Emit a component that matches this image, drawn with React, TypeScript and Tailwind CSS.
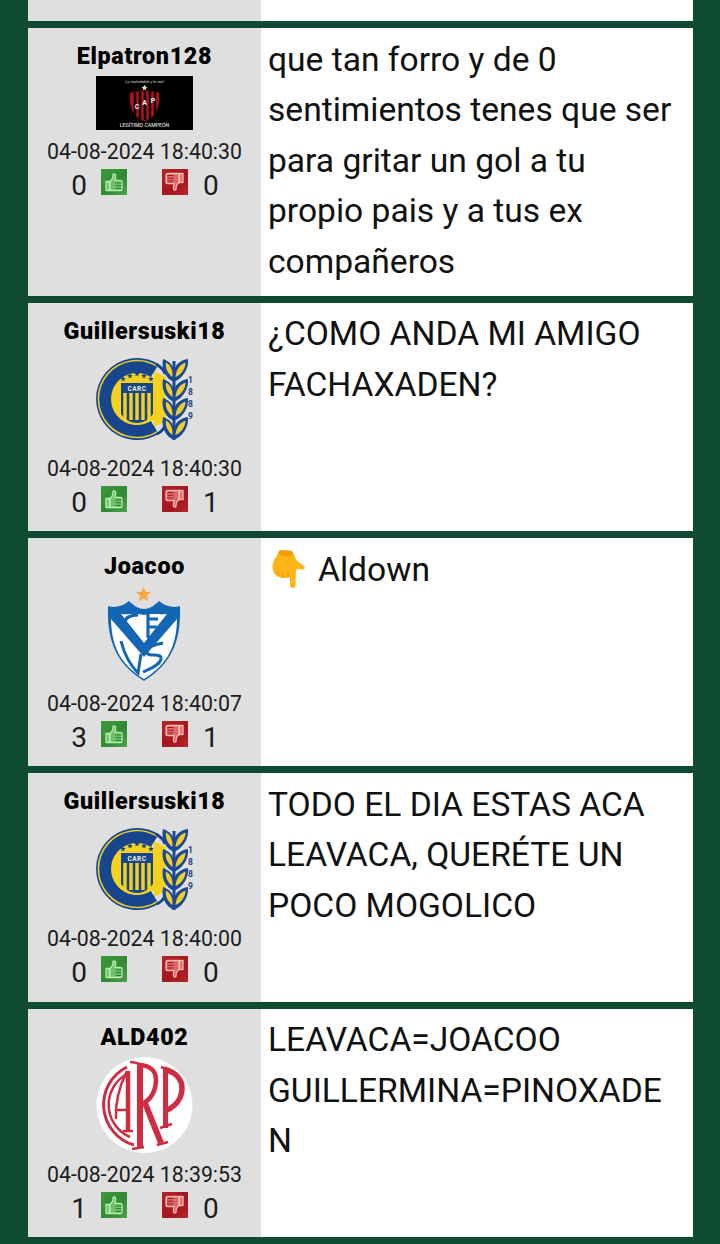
import React from "react";

const ThumbUp = () => (
  <svg viewBox="0 0 26 26" className="block w-[26px] h-[26px]">
    <defs>
      <linearGradient id="gu" x1="0" y1="0" x2="1" y2="1">
        <stop offset="0" stopColor="#3f9a3c" />
        <stop offset="0.55" stopColor="#2f8a33" />
        <stop offset="1" stopColor="#4aa24a" />
      </linearGradient>
    </defs>
    <rect width="26" height="26" fill="url(#gu)" />
    <path d="M5 12.500h3.400v9H5zM9 12.400c2-1.200 3-3.400 3-6.600 0-1.300 2.600-1.300 2.700.7.1 1.700-.4 3.300-.9 4.800h5.600c1.200 0 1.700.8 1.600 1.700v6.600c0 1-.7 1.900-1.800 1.900H9z" fill="#6fc06b" stroke="#b6efb0" strokeWidth="1.300" strokeLinejoin="round" />
    <path d="M14.500 14h6M14.500 16.800h6M14.500 19.500h6" stroke="#2a7d2e" strokeWidth="1.100" />
  </svg>
);

const ThumbDown = () => (
  <svg viewBox="0 0 26 26" className="block w-[26px] h-[26px]">
    <defs>
      <linearGradient id="gd" x1="0" y1="0" x2="1" y2="1">
        <stop offset="0" stopColor="#b32226" />
        <stop offset="0.6" stopColor="#a3161c" />
        <stop offset="1" stopColor="#b8282c" />
      </linearGradient>
    </defs>
    <rect width="26" height="26" fill="url(#gd)" />
    <path d="M21 13.500h-3.400v-9H21zM17 13.600c-2 1.200-3 3.400-3 6.600 0 1.300-2.600 1.300-2.700-.7-.1-1.700.4-3.300.9-4.800H5.600c-1.200 0-1.700-.8-1.600-1.700V6.400c0-1 .7-1.900 1.800-1.900H17z" fill="#d96a68" stroke="#f3b8b4" strokeWidth="1.300" strokeLinejoin="round" />
    <path d="M11.500 12H5.500M11.500 9.200H5.500M11.500 6.500H5.500" stroke="#a3161c" strokeWidth="1.100" />
  </svg>
);

const CapLogo = () => (
  <svg viewBox="0 0 97 54" className="block w-[97px] h-[54px]">
    <rect width="97" height="54" fill="#000" />
    <text x="48.500" y="6.500" textAnchor="middle" fontSize="4" fontStyle="italic" fill="#ddd" fontFamily="Roboto, sans-serif">Lo inolvidable y lo real</text>
    <path d="M48.500 8.800l.9 2 2.100.2-1.600 1.300.5 2-1.900-1.100-1.900 1.100.5-2-1.600-1.300 2.100-.2z" fill="#f2eeb5" />
    <path d="M34 17c5-1.500 10-2.300 14.500-2.300S58 15.500 63 17c.4 8-.4 15-4 21-3 3.500-7 6-10.500 7C45 44 41 41.500 38 38c-3.600-6-4.400-13-4-21z" fill="#b5121b" stroke="#7b0d13" strokeWidth=".6" />
    <path d="M39 16v24M44 15v28M49 15v29M54 15v28M59 16v23" stroke="#0b0b0b" strokeWidth="2.600" />
    <text x="41" y="33" textAnchor="middle" fontSize="7" fontWeight="700" fill="#f2f2f2" fontFamily="Roboto, sans-serif">C</text>
    <text x="48.500" y="29" textAnchor="middle" fontSize="7" fontWeight="700" fill="#f2f2f2" fontFamily="Roboto, sans-serif">A</text>
    <text x="57" y="27" textAnchor="middle" fontSize="7" fontWeight="700" fill="#f2f2f2" fontFamily="Roboto, sans-serif">P</text>
    <text x="48.500" y="51" textAnchor="middle" fontSize="5.200" fontWeight="500" fill="#d8d8d8" fontFamily="Roboto, sans-serif">LEGÍTIMO CAMPEÓN</text>
  </svg>
);

const Laurel = ({ y }: { y: number }) => (
  <g transform={`translate(0 ${y})`}>
    <path d="M78 31C69 27 65 18 67 8c6 2 10 6 11 12 1-6 6-11 14-12 1 10-5 19-14 23z" fill="#1a4a96" />
    <path d="M76.500 26C72 23 69 17 70 11.500c4 2 7 7 6.500 14.500z" fill="#f3cb2b" />
    <path d="M79.500 26c.5-7 4-12.500 10-14.500 0 6-4 12-10 14.500z" fill="#f3cb2b" />
  </g>
);

const Star = ({ x, y, r }: { x: number; y: number; r: number }) => {
  const pts = Array.from({ length: 10 }, (_, i) => {
    const a = (-90 + i * 36) * (Math.PI / 180);
    const q = i % 2 === 0 ? r : r * 0.42;
    return `${(x + q * Math.cos(a)).toFixed(2)},${(y + q * Math.sin(a)).toFixed(2)}`;
  }).join(" ");
  return <polygon points={pts} fill="#17468e" />;
};

const CentralLogo = () => (
  <svg viewBox="0 0 97 96" className="block w-[97px] h-[96px]">
    <circle cx="41" cy="48" r="27" fill="#f6d21f" />
    <path d="M58 20l12 6v44l-12 6z" fill="#f6d21f" />
    <path d="M58.800 19.600A33.500 33.500 0 1 0 58.800 76.400" fill="none" stroke="#17468e" strokeWidth="15" />
    <path d="M61.400 15.400A38.500 38.500 0 1 0 61.400 80.600" fill="none" stroke="#e9c92c" strokeWidth="1.600" />
    <path d="M60 13c5 3 8 6 9 10M61 83c4-2 7-5 8-9" fill="none" stroke="#17468e" strokeWidth="3" />
    {[[27, 28], [34, 25], [41, 23], [48, 25], [55, 28]].map(([x, y]) => (
      <Star key={x} x={x} y={y} r={3} />
    ))}
    <path d="M25 32h32v31c-4 5-9 9-16 9s-12-4-16-9z" fill="#17468e" />
    <text x="41" y="39.500" textAnchor="middle" fontSize="6.500" fontWeight="700" letterSpacing=".5" fill="#f4f1cf" fontFamily="Roboto, sans-serif">CARC</text>
    {[29, 35, 41, 47, 53].map((x) => (
      <rect key={x} x={x - 1.700} y="42" width="3.400" height="27" fill="#f6d21f" />
    ))}
    <path d="M78 10v79" stroke="#1a4a96" strokeWidth="3" />
    <Laurel y={0} />
    <Laurel y={20} />
    <Laurel y={39} />
    <Laurel y={58} />
    {["1", "8", "8", "9"].map((d, i) => (
      <text key={i} x="94.500" y={[32, 44, 56, 68][i]} textAnchor="middle" fontSize="8.500" fontWeight="700" fill="#17468e" fontFamily="Roboto, sans-serif">{d}</text>
    ))}
  </svg>
);

const VelezLogo = () => (
  <svg viewBox="0 0 97 96" className="block w-[97px] h-[96px]">
    <path d="M47.500 1l2.200 4.700 5.200.6-3.800 3.500 1 5.100-4.600-2.500-4.600 2.500 1-5.100-3.800-3.500 5.200-.6z" fill="#f6a942" />
    <path d="M12 20c6 2 14 1 21-5 5 5 10 8 15 8s10-3 15-8c7 6 15 7 21 5 1 30-5 56-36 75C17 76 11 50 12 20z" fill="#1366b3" />
    <path d="M15 33l33 38 33-38c-.5 24-7 44-33 60-26-16-32.500-36-33-60z" fill="#fff" />
    <path d="M25 28c8 1 15-1 23 1 8-2 15 0 23-1L48 57z" fill="#fff" />
    <path d="M42 29c-8 0-13 3-13 7 0 5 7 10 13 16" fill="none" stroke="#1366b3" strokeWidth="3.200" />
    <path d="M52 28v24M52 33h10M52 41h9" fill="none" stroke="#1366b3" strokeWidth="3.200" />
    <path d="M25 55c3 12 9 24 17 32 1-6 2-12 3-19" fill="none" stroke="#1366b3" strokeWidth="3" />
    <path d="M67 57c-7 1-16 4-16 9 0 6 15 0 14 7-1 6-11 10-18 13" fill="none" stroke="#1366b3" strokeWidth="3" />
  </svg>
);

const RiverLogo = () => (
  <svg viewBox="0 0 97 96" className="block w-[97px] h-[96px]">
    <circle cx="48.500" cy="48" r="48" fill="#fff" />
    <g fill="none" stroke="#cf2c42" strokeLinecap="butt">
      <path d="M31 10A42 42 0 0 0 38 88" strokeWidth="3" />
      <path d="M31 17A35 35 0 0 0 34 80" strokeWidth="2.500" />
      <path d="M31 14C24 28 19 44 20 62" strokeWidth="2.500" />
      <path d="M32 14v59" strokeWidth="4.500" />
      <path d="M27 74h10M20 53h11" strokeWidth="2.500" />
      <path d="M44 6v85" strokeWidth="6" />
      <path d="M34 5c4 0 7 1 10 2M36 92l12-2" strokeWidth="2.500" />
      <path d="M45 8c10 1 15 7 15 15 0 10-5 20-13 23" strokeWidth="4.500" />
      <path d="M49 46l16 40" strokeWidth="6" />
      <path d="M61 88l11-3" strokeWidth="2.500" />
      <path d="M69.500 12v59" strokeWidth="5" />
      <path d="M64 71l12-4M65 10l5 2" strokeWidth="2.500" />
      <path d="M68 12c11 3 18 10 18 19 0 10-6 18-15 22" strokeWidth="5.500" />
    </g>
  </svg>
);

const PointDown = () => (
  <svg viewBox="0 0 38 40" className="inline-block w-[38px] h-[40px] align-[-8px] mr-[9px] ml-[3px]">
    <path d="M9 1l12 1c2 3 3 7 5 10l7 5c2 2 0 4-2 3.500L25 20l-.5 16c-.5 4-5.500 4-5.500 0v-8c-5 2-13 1-16-4C0 18 2 12 5 8z" fill="#ffb418" />
    <path d="M9 1l12 1 1 4c-5 2-11 1-15-1z" fill="#f59a0a" />
    <path d="M7 22v5M12 24v4M17 24v4" stroke="#f09606" strokeWidth="1.200" strokeLinecap="round" />
  </svg>
);

type Post = {
  name: string;
  logo: React.ReactNode;
  date: string;
  up: number;
  down: number;
  text: React.ReactNode;
};

const posts: Post[] = [
  {
    name: "Elpatron128",
    logo: <CapLogo />,
    date: "04-08-2024 18:40:30",
    up: 0,
    down: 0,
    text: "que tan forro y de 0 sentimientos tenes que ser para gritar un gol a tu propio pais y a tus ex compañeros",
  },
  {
    name: "Guillersuski18",
    logo: <CentralLogo />,
    date: "04-08-2024 18:40:30",
    up: 0,
    down: 1,
    text: "¿COMO ANDA MI AMIGO FACHAXADEN?",
  },
  {
    name: "Joacoo",
    logo: <VelezLogo />,
    date: "04-08-2024 18:40:07",
    up: 3,
    down: 1,
    text: (
      <>
        <PointDown />
        Aldown
      </>
    ),
  },
  {
    name: "Guillersuski18",
    logo: <CentralLogo />,
    date: "04-08-2024 18:40:00",
    up: 0,
    down: 0,
    text: "TODO EL DIA ESTAS ACA LEAVACA, QUERÉTE UN POCO MOGOLICO",
  },
  {
    name: "ALD402",
    logo: <RiverLogo />,
    date: "04-08-2024 18:39:53",
    up: 1,
    down: 0,
    text: "LEAVACA=JOACOO GUILLERMINA=PINOXADEN",
  },
];

export default function App() {
  return (
    <div className="w-[720px] h-[1244px] overflow-hidden bg-[#0f4b33] pl-[28px] font-['Roboto',sans-serif] flex flex-col gap-[7px]">
      <div className="flex h-[21px] shrink-0">
        <div className="w-[233px] bg-[#dfdfdf]" />
        <div className="w-[432px] bg-white" />
      </div>
      {posts.map((p, i) => (
        <div key={i} className="flex shrink-0">
          <div className="w-[233px] bg-[#dfdfdf] flex flex-col items-center pt-[14px] pb-[14.200px]">
            <div className="h-[26px] leading-[28px] text-[23.300px] font-black tracking-[0.65px] text-black">{p.name}</div>
            <div className="mt-[8px]">{p.logo}</div>
            <div className="mt-[8px] h-[26px] leading-[28px] text-[21.300px] text-[#1c1c1c]">{p.date}</div>
            <div className="mt-[6px] h-[30px] w-full flex items-start text-[28px] leading-[32px] text-[#1c1c1c]">
              <span className="w-[59px] text-right">{p.up}</span>
              <span className="ml-[14px] -mt-px">
                <ThumbUp />
              </span>
              <span className="ml-[35px] -mt-px">
                <ThumbDown />
              </span>
              <span className="ml-[15px]">{p.down}</span>
            </div>
          </div>
          <div className="w-[432px] bg-white pl-[7px] pr-[12px] pt-[6.500px] pb-[8.500px] text-[33.600px] leading-[50.600px] text-[#111] [overflow-wrap:anywhere]">
            {p.text}
          </div>
        </div>
      ))}
    </div>
  );
}
